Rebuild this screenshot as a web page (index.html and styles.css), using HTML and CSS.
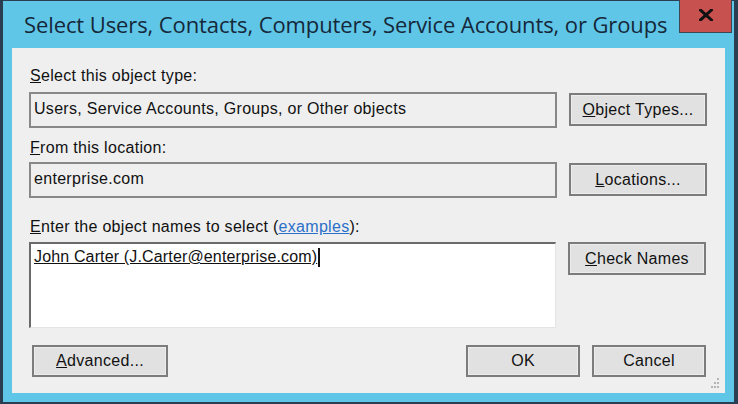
FILE: index.html
```html
<!DOCTYPE html>
<html>
<head>
<meta charset="utf-8">
<link rel="stylesheet" href="styles.css">
</head>
<body>
<div class="window">
  <div class="titlebar">
    <div class="title">Select Users, Contacts, Computers, Service Accounts, or Groups</div>
    <div class="close"><svg width="14" height="12" viewBox="0 0 14 12"><path d="M1.5 1 L12.5 11 M12.5 1 L1.5 11" stroke="#111" stroke-width="3" stroke-linecap="square"/></svg></div>
  </div>
  <div class="content">
    <div class="label l1"><u>S</u>elect this object type:</div>
    <div class="row r1">
      <div class="field">Users, Service Accounts, Groups, or Other objects</div>
      <div class="btn side"><u>O</u>bject Types...</div>
    </div>
    <div class="label l2"><u>F</u>rom this location:</div>
    <div class="row r2">
      <div class="field">enterprise.com</div>
      <div class="btn side"><u>L</u>ocations...</div>
    </div>
    <div class="label l3"><u>E</u>nter the object names to select (<span class="link">examples</span>):</div>
    <div class="row r3">
      <div class="textarea"><span class="resolved">John Carter (J.Carter@enterprise.com)</span><span class="caret"></span></div>
      <div class="btn side"><u>C</u>heck Names</div>
    </div>
    <div class="footer">
      <div class="btn adv"><u>A</u>dvanced...</div>
      <div class="spacer"></div>
      <div class="btn ok">OK</div>
      <div class="btn cancel">Cancel</div>
    </div>
    <svg class="grip" width="10" height="12" viewBox="0 0 10 12">
      <rect x="7" y="1" width="2" height="2" fill="#b5b5b5"/>
      <rect x="4" y="5" width="2" height="2" fill="#b5b5b5"/>
      <rect x="7" y="5" width="2" height="2" fill="#b5b5b5"/>
      <rect x="1" y="9" width="2" height="2" fill="#b5b5b5"/>
      <rect x="4" y="9" width="2" height="2" fill="#b5b5b5"/>
      <rect x="7" y="9" width="2" height="2" fill="#b5b5b5"/>
    </svg>
  </div>
</div>
</body>
</html>
```
FILE: styles.css
```css
* { box-sizing: border-box; }
html, body { margin: 0; padding: 0; background: #2b3d50; }
body { width: 738px; height: 404px; overflow: hidden; }

.window {
  width: 738px;
  height: 404px;
  background: #60c6e7;
  border-style: solid;
  border-color: #2b3d50;
  border-width: 1px 4px 2px 3px;
  display: flex;
  flex-direction: column;
}

.titlebar {
  height: 47px;
  display: flex;
  align-items: flex-start;
  padding-left: 21px;
}
.title {
  font-family: "Open Sans", "Noto Sans", sans-serif;
  font-size: 22px;
  color: #15283a;
  margin-top: 8px;
  white-space: nowrap;
  flex: 1;
  letter-spacing: -0.1px;
}
.close {
  width: 53px;
  height: 33px;
  margin-top: -1px;
  margin-right: 2px;
  background: #c7514f;
  border: 1px solid #3a4856;
  border-top: none;
  display: flex;
  align-items: center;
  justify-content: center;
  padding-bottom: 3px;
}

.content {
  position: relative;
  margin: 0 9px;
  height: 345px;
  background: #efefef;
  padding: 18px 0 0 17px;
  font-family: "Liberation Sans", Arial, sans-serif;
  font-size: 16px;
  letter-spacing: 0.3px;
  color: #111;
  display: flex;
  flex-direction: column;
}

.label { height: 20px; line-height: 20px; padding-left: 1px; white-space: nowrap; }
.l1 { margin-bottom: 6px; }
.l2 { margin-top: 10px; margin-bottom: 4px; }
.l3 { margin-top: 19px; margin-bottom: 5px; }
.link { color: #2a6fc9; text-decoration: underline; }

.row { display: flex; align-items: flex-start; gap: 12px; }

.field {
  width: 528px;
  height: 36px;
  border: 2px solid #888;
  background: #efefef;
  padding-left: 3px;
  line-height: 30px;
  white-space: nowrap;
}

.btn {
  height: 33px;
  background: #e1e1e1;
  border: 2px solid #7c7c7c;
  box-shadow: inset 0 0 0 1px #ececec;
  display: flex;
  align-items: center;
  justify-content: center;
  white-space: nowrap;
}
.side { width: 138px; margin-top: 1px; }
.r3 .side { margin-top: 0; }

.textarea {
  width: 527px;
  height: 86px;
  background: #fff;
  border-style: solid;
  border-width: 2px 1px 1px 2px;
  border-color: #6a6a6a #e4e4e4 #e4e4e4 #6a6a6a;
  padding: 3px 0 0 3px;
  line-height: 20px;
  white-space: nowrap;
  display: flex;
  align-items: flex-start;
}
.resolved { text-decoration: underline; letter-spacing: 0.15px; }
.caret { width: 2px; height: 19px; background: #111; margin-left: 1px; margin-top: 1px; }

.footer {
  display: flex;
  margin-top: 17px;
  padding-left: 3px;
}
.adv { width: 136px; height: 32px; }
.spacer { flex: 1; }
.ok { width: 114px; height: 32px; }
.cancel { width: 114px; height: 32px; margin-left: 12px; margin-right: 19px; }

.grip { position: absolute; right: 5px; bottom: 4px; }
```
